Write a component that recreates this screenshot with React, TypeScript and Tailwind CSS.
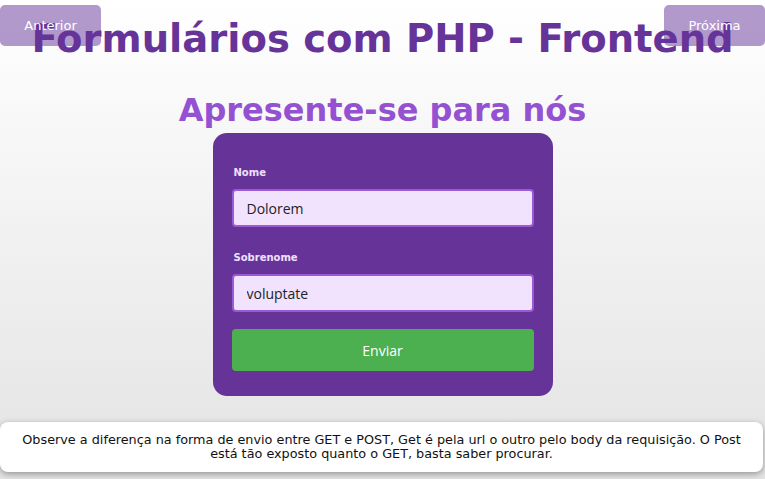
import React from 'react';

const App: React.FC = () => {
  return (
    <div className="relative min-h-[479px] bg-gradient-to-b from-white to-[#e3e3e3] font-['DejaVu_Sans',sans-serif] overflow-hidden">
      <button className="absolute left-0 top-[5px] z-10 w-[101px] h-[41px] rounded-[5px] bg-[#663399]/50 text-white text-[13px]">
        Anterior
      </button>
      <button className="absolute right-0 top-[5px] z-10 w-[101px] h-[41px] rounded-[5px] bg-[#663399]/50 text-white text-[13px]">
        Próxima
      </button>

      <div className="flex flex-col items-center pt-[16px]">
        <h1 className="text-[38.5px] leading-[46px] font-bold text-[#663399] whitespace-nowrap">
          Formulários com PHP - Frontend
        </h1>
        <h2 className="mt-[29px] text-[32px] leading-[38px] font-bold text-[#9452d2] whitespace-nowrap">
          Apresente-se para nós
        </h2>

        <form className="mt-[4px] w-[340px] rounded-[14px] bg-[#663399] px-[19px] pt-[32px] pb-[25px]">
          <label className="block ml-[2px] text-[10px] font-bold text-[#f0e0ff]">Nome</label>
          <input
            defaultValue="Dolorem"
            className="mt-[9px] block w-full h-[38px] rounded-[4px] border-2 border-[#9b59d6] bg-[#f1e2fe] px-[13px] text-[14px] text-[#222] font-['Open_Sans',sans-serif] outline-none"
          />
          <label className="block mt-[23px] ml-[2px] text-[10px] font-bold text-[#f0e0ff]">Sobrenome</label>
          <input
            defaultValue="voluptate"
            className="mt-[9px] block w-full h-[38px] rounded-[4px] border-2 border-[#9b59d6] bg-[#f1e2fe] px-[13px] text-[14px] text-[#222] font-['Open_Sans',sans-serif] outline-none"
          />
          <button
            type="button"
            className="mt-[17px] block w-full h-[42px] rounded-[4px] bg-[#4caf50] text-white text-[14px] font-['Open_Sans',sans-serif]"
          >
            Enviar
          </button>
        </form>
      </div>

      <div className="absolute left-0 right-[2px] top-[422px] h-[50px] rounded-[8px] bg-white shadow-[0_2px_6px_rgba(0,0,0,0.35)] flex items-center justify-center">
        <p className="text-center text-[12.8px] leading-[14px] text-[#111] whitespace-nowrap">
          Observe a diferença na forma de envio entre GET e POST, Get é pela url o outro pelo body da requisição. O Post
          <br />
          está tão exposto quanto o GET, basta saber procurar.
        </p>
      </div>
    </div>
  );
};

export default App;
